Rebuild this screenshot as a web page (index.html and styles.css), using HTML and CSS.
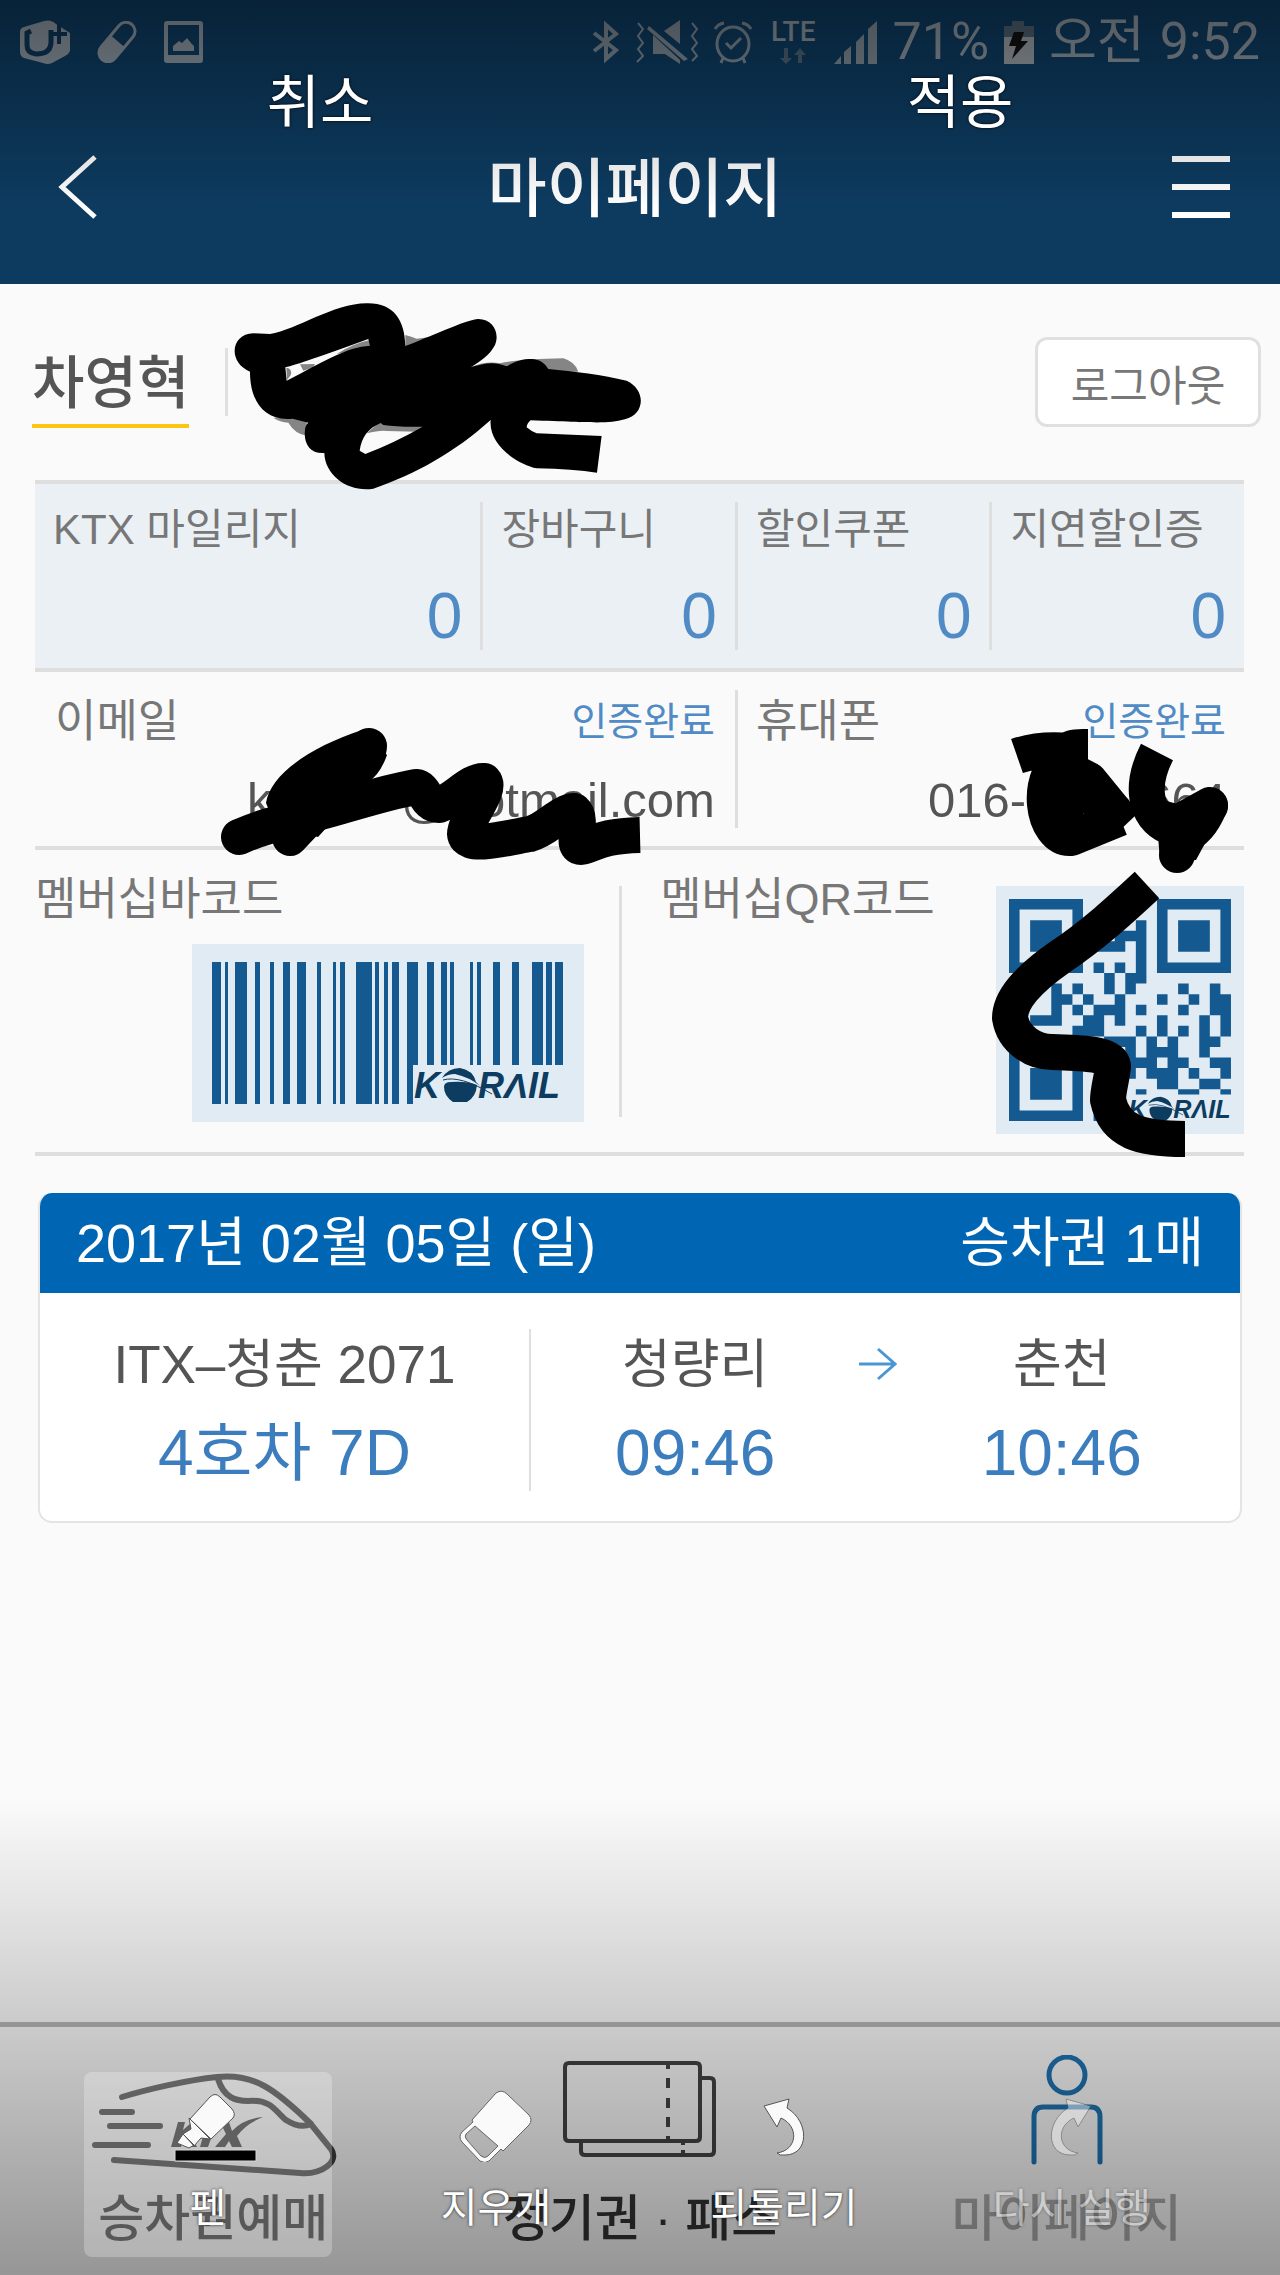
FILE: index.html
```html
<!DOCTYPE html>
<html lang="ko">
<head>
    <meta charset="UTF-8">
    <meta name="viewport" content="width=device-width, initial-scale=1.0">
    <title>마이페이지</title>
    <link rel="stylesheet" href="styles.css">
</head>
<body>

    <!-- Header -->
    <header class="header">
        <div class="status-bar">
            <div class="status-left">
                <svg width="50" height="44" viewBox="0 0 50 44">
                    <path fill="#8a959f" d="M4 7 24 1Q31 -1 36 4L50 13V31Q49 34 45 36L32 43Q28 45 23 43L4 38Q0 36 0 32V12Q0 8 4 7Z"/>
                    <path fill="none" stroke="#0d3657" stroke-width="5" d="M11 11 7 13V25Q7 33 16 34Q31 34 31 22V10"/>
                    <path fill="none" stroke="#0d3657" stroke-width="4" d="M39 2V24M33 14H47"/>
                </svg>
                <svg width="42" height="42" viewBox="0 0 42 42">
                    <g transform="rotate(40 21 21)">
                        <rect x="12" y="-2" width="18" height="46" rx="9" fill="none" stroke="#8a959f" stroke-width="3"/>
                        <path fill="#8a959f" d="M11 20H31V35A10 10 0 0 1 11 35Z"/>
                    </g>
                </svg>
                <svg width="39" height="42" viewBox="0 0 39 42">
                    <path fill="#8a959f" fill-rule="evenodd" d="M3 0H36Q39 0 39 3V39Q39 42 36 42H3Q0 42 0 39V3Q0 0 3 0ZM4 4V34H35V4ZM9 30V25L15 20L18 22L23 17L27 22L30 25V30Z"/>
                </svg>
            </div>
            <div class="status-right">
                <svg width="28" height="42" viewBox="0 0 28 42">
                    <path fill="none" stroke="#7c8993" stroke-width="4" d="M2 12 24 29 14 38V4L24 13 2 30"/>
                </svg>
                <svg width="64" height="44" viewBox="0 0 64 44">
                    <path fill="#7c8993" d="M29 11 45 0V24ZM18 15 45 40V44L30 34H18ZM14 6 53 39 49 41 12 9Z"/>
                    <path fill="none" stroke="#7c8993" stroke-width="2" d="M3 3 8 9 3 16 8 23 3 29 8 36 2 42M57 3 62 9 57 16 62 23 57 29 62 36 57 41"/>
                </svg>
                <svg width="38" height="43" viewBox="0 0 38 43">
                    <g fill="none" stroke="#7c8993" stroke-width="3">
                        <ellipse cx="19" cy="23" rx="16" ry="17"/>
                        <path d="M1 8Q4 3 10 2M37 8Q34 3 28 2M12 22 17 27 27 17M9 37 7 42M29 37 31 42"/>
                    </g>
                </svg>
                <div class="network">
                    <span>LTE</span>
                    <svg width="26" height="16" viewBox="0 0 26 16">
                        <path fill="#4a6071" d="M4 0H8V10H12L6 16 0 10H4ZM18 15H22V7H26L20 0 14 7H18Z"/>
                    </svg>
                </div>
                <svg width="43" height="43" viewBox="0 0 43 43">
                    <path fill="#7c8993" d="M0 43 7 35V43ZM10 31 17 25V43H10ZM22 21 30 13V43H22ZM34 8 43 0V43H34Z"/>
                </svg>
                <span class="status-text battery-level">71%</span>
                <svg width="30" height="43" viewBox="0 0 30 43">
                    <path fill="#4a5f6f" d="M8 0H20V5H30V17H0V5H8Z"/>
                    <path fill="#969da4" d="M0 16H30V43H0Z"/>
                    <path fill="#111" d="M10 11H20L17 20H24L8 38 12 25H5Z"/>
                </svg>
                <span class="status-text">오전</span>
                <span class="status-text">9:52</span>
            </div>
        </div>
        <div class="title-bar">
            <button class="icon-button" type="button" aria-label="뒤로">
                <svg width="40" height="64" viewBox="0 0 40 64">
                    <path fill="none" stroke="#fff" stroke-width="5" d="M37 2 4 32 37 62"/>
                </svg>
            </button>
            <h1>마이페이지</h1>
            <button class="icon-button" type="button" aria-label="메뉴">
                <svg width="58" height="64" viewBox="0 0 58 64">
                    <path stroke="#fff" stroke-width="6" d="M0 4H58M0 32H58M0 60H58"/>
                </svg>
            </button>
        </div>
    </header>

    <!-- My page -->
    <main>
        <div class="profile">
            <h2>차영혁</h2>
            <span class="profile-line"></span>
            <button class="logout" type="button">로그아웃</button>
        </div>

        <dl class="stats">
            <div class="cell"><dt>KTX 마일리지</dt><dd>0</dd></div>
            <div class="cell"><dt>장바구니</dt><dd>0</dd></div>
            <div class="cell"><dt>할인쿠폰</dt><dd>0</dd></div>
            <div class="cell"><dt>지연할인증</dt><dd>0</dd></div>
        </dl>

        <div class="contact">
            <div class="contact-cell">
                <div class="contact-top"><span class="label">이메일</span><span class="verified">인증완료</span></div>
                <div class="contact-value email"><span>k</span><span>@hotmail.com</span></div>
            </div>
            <div class="contact-cell">
                <div class="contact-top"><span class="label">휴대폰</span><span class="verified">인증완료</span></div>
                <div class="contact-value phone"><span>016-</span><span>664</span></div>
            </div>
        </div>

        <div class="membership">
            <div class="barcode-cell">
                <span class="label">멤버십바코드</span>
                <svg class="barcode" viewBox="0 0 392 178" role="img" aria-label="KORAIL 바코드">
                    <path fill="#145a90" d="M20 18h9v142h-9zM33 18h3v142h-3zM43 18h12v142h-12zM63 18h5v142h-5zM78 18h4v142h-4zM91 18h7v142h-7zM105 18h9v142h-9zM125 18h4v142h-4zM141 18h3v142h-3zM148 18h5v142h-5zM164 18h16v142h-16zM183 18h4v142h-4zM192 18h4v142h-4zM200 18h7v142h-7zM215 18h11v103h-5v39h-6zM235 18h7v103h-7zM249 18h6v103h-6zM258 18h4v103h-4zM278 18h3v103h-3zM285 18h4v103h-4zM301 18h7v103h-7zM320 18h7v103h-7zM340 18h11v103h-11zM354 18h6v103h-6zM363 18h8v103h-8z"/>
                    <g id="korail" fill="#0d3c61">
                        <text class="korail-text" x="222" y="154">K</text>
                        <text class="korail-text" x="286" y="154">RΛIL</text>
                        <path d="M252 143Q252 138 259 138Q275 137 285 141Q284 153 275 158H261Q252 152 252 143ZM250 134Q256 124 268 124Q281 126 284 138L288 142Q277 133 263 130Q256 130 250 134Z"/>
                        <path fill="none" stroke="#0d3c61" stroke-width="1" d="M251 136Q268 131 300 150"/>
                    </g>
                </svg>
            </div>
            <div class="qr-cell">
                <span class="label">멤버십QR코드</span>
                <svg class="qr" viewBox="0 0 248 248" role="img" aria-label="KORAIL QR코드">
                    <!-- one unit per module -->
                    <g transform="translate(13 13) scale(10.57)" fill="none" stroke="#145a90">
                        <path d="M.5 .5h6v6h-6zM14.5 .5h6v6h-6zM.5 14.5h6v6h-6z"/>
                        <path stroke-width="3" d="M2 3.5h3M16 3.5h3M2 17.5h3"/>
                        <path d="M12 2.5h1M10 3.5h3M8 4.5h3m1 0h1M12 5.5h1M8 6.5h1m1 0h1m1 0h1M9 7.5h1m1 0h2M4 8.5h1m1 0h1m2 0h1m1 0h1m4 0h1m2 0h1M4 9.5h2m1 0h1m2 0h1m3 0h1m2 0h1m1 0h2M4 10.5h1m1 0h1m1 0h3m1 0h1m3 0h1m2 0h2M2 11.5h3m2 0h2m1 0h1m3 0h1m3 0h1m1 0h1M6 12.5h3m3 0h1m1 0h1m1 0h1m1 0h1m1 0h1M9 13.5h3m1 0h1m1 0h1m2 0h2M11 14.5h1m1 0h3m2 0h1M11 15.5h3m1 0h2m2 0h2M11 16.5h1m1 0h3m1 0h1m2 0h1M14 17.5h2m2 0h2M8 20.5h1"/>
                        <path stroke-width=".5" d="M12 18.25h1m3 0h2m2 0h1"/>
                    </g>
                    <use href="#korail" transform="translate(-23 124) scale(.7)"/>
                </svg>
            </div>
        </div>

        <section class="ticket">
            <div class="ticket-head">
                <span>2017년 02월 05일 (일)</span>
                <span>승차권 1매</span>
            </div>
            <div class="ticket-body">
                <div class="train">
                    <p>ITX–청춘 2071</p>
                    <p class="blue">4호차 7D</p>
                </div>
                <div class="journey">
                    <div><p>청량리</p><p class="blue">09:46</p></div>
                    <svg width="38" height="34" viewBox="0 0 38 34">
                        <path fill="none" stroke="#4c97d3" stroke-width="3" d="M0 17H36M19 2 36 17 19 32"/>
                    </svg>
                    <div><p>춘천</p><p class="blue">10:46</p></div>
                </div>
            </div>
        </section>
    </main>

    <nav class="bottom-nav">
        <a href="#booking">
            <svg width="250" height="136" viewBox="0 0 250 136">
                <g fill="none" stroke="#3c3c3c" stroke-width="6" stroke-linecap="round">
                    <path d="M34 42C60 34 100 25 129 22C165 18 187 34 222 68L243 94C252 107 233 120 212 118L26 105"/>
                    <path d="M130 24C136 43 148 46 160 46C185 44 188 58 198 65Q212 74 223 69M14 57H44M22 71H72M7 90H60"/>
                </g>
                <path fill="#3c3c3c" d="M90 67H97L95 75 104 67H112L101 78 109 92H101L95 83 93 92H83ZM116 73H130L129 78H125L120 92H112L116 78H114ZM132 67H141L144 76Q155 64 175 62Q158 69 149 81L154 92H144L141 86 137 92H127L138 79Z"/>
            </svg>
            <span>승차권예매</span>
        </a>
        <a href="#pass">
            <svg width="156" height="136" viewBox="0 0 156 136">
                <path fill="none" stroke="#444" stroke-width="4" d="M7 8H134Q138 8 138 12V82Q138 86 134 86H7Q3 86 3 82V12Q3 8 7 8ZM138 23H148Q152 23 152 27V96Q152 100 148 100H23Q19 100 19 96V86M106 9V14M106 23V33M106 43V53M106 62V72M106 81V86M121 87V90M121 95V100"/>
            </svg>
            <span>정기권 · 패스</span>
        </a>
        <a class="current" href="#mypage">
            <svg width="74" height="136" viewBox="0 0 74 136">
                <g fill="none" stroke="#1f74b3" stroke-width="5">
                    <ellipse cx="37" cy="20" rx="18" ry="18"/>
                    <path stroke-linecap="round" d="M4 107V62Q4 52 13 52H61Q70 52 70 62V107"/>
                </g>
            </svg>
            <span>마이페이지</span>
        </a>
    </nav>

    <!-- Image editor layer -->
    <div class="shade shade-top"></div>
    <div class="shade shade-bottom"></div>

    <svg class="drawing" viewBox="0 0 1280 2275" aria-hidden="true">
        <g transform="translate(220 290) scale(.3333)">
            <path class="under" d="M350 192Q400 160 450 150V172ZM556 135Q575 140 590 146L630 141 556 172ZM753 231Q800 212 840 220Q900 207 1030 205Q1065 215 1075 245L753 250ZM160 383Q180 397 205 398Q225 432 260 437V380ZM440 430Q480 420 500 423L590 425 620 405 480 395ZM199 233Q218 236 212 256L201 270ZM240 223 285 222 280 232 250 242Z"/>
            <path class="blot" d="M100 130 150 132C230 120 340 40 440 40C520 38 555 90 556 168C620 145 740 88 775 87C820 87 840 130 825 165C810 195 780 215 753 231C790 222 820 212 860 229C890 212 905 207 935 207C960 208 975 220 985 237C1060 244 1150 255 1220 272C1280 300 1275 375 1215 388C1160 402 1130 398 932 391Q921 400 920 412Q935 425 950 430L1145 438 1131 548Q1060 537 950 535C900 525 805 470 812 390C700 490 590 550 460 596C390 608 315 560 313 489C270 492 250 460 255 420Q256 405 265 398L218 386C130 395 90 330 90 245C20 215 35 130 100 130ZM196 232Q240 222 445 147L450 167C380 172 330 205 200 272ZM482 399 490 405Q540 412 608 410Q520 460 436 492L419 482C425 440 445 415 482 399Z"/>
        </g>
        <g class="pen">
            <path class="round" d="M239 837Q266 825 285 823L369 746Q369 760 340 785L290 838"/>
            <path class="blot" d="M266 803C270 775 310 747 362 730L387 755Q380 775 367 783L318 837 275 825Z"/>
            <path d="M285 820C325 814 370 795 416 787C426 788 425 805 439 805C455 800 470 780 484 781C492 790 465 820 465 834C466 850 515 836 530 834C546 830 560 812 574 811C584 820 570 847 581 847C595 844 600 836 640 835"/>
            <path d="M1017 756Q1040 748 1070 751C1030 775 1043 840 1071 838L1120 818M1120 818 1089 780 1060 765"/>
            <path class="blot" d="M1034 768 1059 736Q1064 728 1088 729V763L1106 785 1128 799 1136 815 1118 832 1087 819 1084 813 1077 819Q1050 830 1034 768Z"/>
            <circle cx="1089" cy="781" r="18"/>
            <path d="M1157 752C1140 785 1144 816 1170 827L1210 805Q1200 830 1185 835L1178 854"/>
            <path class="blot" d="M1150 800 1165 800Q1175 805 1188 804L1197 792 1226 813 1209 836 1196 860H1160L1158 836Z"/>
            <circle cx="1210" cy="806" r="18"/>
            <circle cx="1177" cy="855" r="18"/>
            <path d="M1147 885C1120 910 1093 935 1060 957C1027 980 1010 1000 1010 1018C1014 1041 1035 1052 1052 1052C1080 1053 1111 1053 1113 1066C1112 1078 1108 1090 1108 1100C1115 1132 1140 1139 1185 1139"/>
        </g>
    </svg>

    <div class="editor-actions">
        <button type="button">취소</button>
        <button type="button">적용</button>
    </div>

    <div class="tools">
        <button class="tool active" type="button">
            <svg width="98" height="76" viewBox="-15 0 98 76">
                <g fill="#fafafa" stroke="#555" stroke-width="1">
                    <path d="M16 33 36 11Q41 6 46 11L58 23Q62 28 59 32L37 53Z"/>
                    <path d="M15 32 36 53 27 52 20 60 9 48 17 43ZM9 48 20 59 15 62 3 57Z"/>
                </g>
                <path stroke="#d8d8d8" stroke-width="1" d="M1 64H82V75H1Z"/>
            </svg>
            <span>펜</span>
        </button>
        <button class="tool" type="button">
            <svg width="84" height="76" viewBox="0 0 84 76">
                <path fill="#fafafa" stroke="#666" stroke-width="1" fill-rule="evenodd" d="M42 7Q48 3 53 8L75 29Q79 34 75 39L49 65 47 63 35 75Q31 78 26 75L8 56Q4 51 8 46L19 36 18 34ZM21 40 12 48Q10 51 13 54L27 70Q31 73 34 70L44 60Z"/>
            </svg>
            <span>지우개</span>
        </button>
        <button class="tool" type="button">
            <svg width="84" height="76" viewBox="0 0 84 76">
                <path fill="#fafafa" stroke="#555" stroke-width="1" d="M22 20 47 13 45 22C68 36 67 69 43 69Q38 70 35 67C56 64 57 40 39 32L35 41Z"/>
            </svg>
            <span>되돌리기</span>
        </button>
        <button class="tool" type="button" disabled>
            <svg width="84" height="76" viewBox="-6 0 84 76">
                <path fill="#fafafa" stroke="#555" stroke-width="1" d="M55 20 30 13 32 22C9 36 10 69 34 69Q39 70 42 67C21 64 20 40 38 32L42 41Z"/>
            </svg>
            <span>다시 실행</span>
        </button>
    </div>

</body>
</html>
```
FILE: styles.css
```css
* {
    box-sizing: border-box;
}

body {
    margin: 0;
    min-height: 100vh;
    position: relative;
    display: flex;
    flex-direction: column;
    background-color: #fafafa;
    color: #555;
    font-family: "Liberation Sans", "Noto Sans CJK KR", sans-serif;
}

h1, h2, p, dl, dd {
    margin: 0;
}

button {
    padding: 0;
    border: none;
    background: none;
    color: inherit;
    font-family: inherit;
}

svg {
    display: block;
    flex-shrink: 0;
}

/* Header */
.header {
    background-color: #0d3b60;
    color: #fff;
}

.status-bar {
    height: 90px;
    padding: 0 20px 6px;
    display: flex;
    justify-content: space-between;
    align-items: center;
}

.status-left {
    display: flex;
    align-items: center;
    gap: 26px;
}

.status-right {
    display: flex;
    align-items: center;
    gap: 15px;
    color: #8a959f;
}

.network {
    display: flex;
    flex-direction: column;
    align-items: center;
    gap: 4px;
    margin: 0 4px;
    font: 500 28px/24px Roboto, sans-serif;
}

.status-text {
    font: 52px/60px Roboto, "Noto Sans CJK KR", sans-serif;
}

.title-bar {
    height: 194px;
    padding: 0 50px 0 58px;
    display: flex;
    justify-content: space-between;
    align-items: center;
}

.title-bar h1 {
    padding-top: 4px;
    font-size: 64px;
    line-height: 80px;
    font-weight: 500;
}

/* Profile */
.profile {
    height: 196px;
    padding: 0 19px 0 32px;
    display: flex;
    align-items: center;
}

.profile h2 {
    padding-top: 6px;
    border-bottom: 4px solid #fcc512;
    font-size: 57px;
    line-height: 82px;
    font-weight: 500;
}

.profile-line {
    width: 3px;
    height: 68px;
    margin-left: 36px;
    background-color: #e0e0e0;
}

.logout {
    width: 226px;
    height: 90px;
    margin-left: auto;
    border: 3px solid #e0e0e0;
    border-radius: 12px;
    background-color: #fff;
    color: #777;
    font-size: 42px;
}

/* Mileage and coupons */
.stats {
    margin: 0 36px 0 35px;
    padding: 18px 0;
    display: grid;
    grid-template-columns: 7fr 4fr 4fr 4fr;
    border-top: 4px solid #dedede;
    border-bottom: 4px solid #dedede;
    background-color: #ebf0f5;
}

.cell {
    height: 148px;
    padding: 0 18px;
}

.cell + .cell {
    border-left: 3px solid #dedede;
}

.cell dt {
    color: #777;
    font-size: 42px;
    line-height: 56px;
}

.cell dd {
    margin-top: 18px;
    color: #508bc5;
    font-size: 64px;
    line-height: 80px;
    text-align: right;
}

/* E-mail and phone */
.contact {
    margin: 0 36px 0 35px;
    padding: 18px 0;
    display: grid;
    grid-template-columns: 11fr 8fr;
    border-bottom: 4px solid #dedede;
}

.contact-cell {
    height: 138px;
    padding: 0 20px;
}

.contact-cell + .contact-cell {
    padding: 0 18px;
    border-left: 3px solid #dedede;
}

.contact-top {
    display: flex;
    justify-content: space-between;
    align-items: center;
}

.label {
    color: #777;
    font-size: 45px;
    line-height: 60px;
}

.verified {
    color: #508bc5;
    font-size: 39px;
    line-height: 64px;
}

.contact-value {
    margin-top: 16px;
    display: flex;
    justify-content: space-between;
    font-size: 49px;
    line-height: 60px;
}

.email {
    padding-left: 192px;
}

.phone {
    padding-left: 172px;
}

/* Membership codes */
.membership {
    margin: 0 36px 0 35px;
    padding: 36px 0 18px;
    display: grid;
    grid-template-columns: 17fr 18fr;
    align-items: start;
    border-bottom: 4px solid #dedede;
}

.membership .label {
    line-height: 28px;
}

.barcode-cell {
    height: 231px;
    padding-right: 35px;
    display: flex;
    flex-direction: column;
    gap: 30px;
    border-right: 3px solid #dedede;
}

.barcode {
    width: 392px;
    height: 178px;
    align-self: flex-end;
    background-color: #e1ebf4;
}

.korail-text {
    font: italic bold 36px "Liberation Sans", sans-serif;
}

.qr-cell {
    padding-left: 38px;
    display: flex;
    justify-content: space-between;
}

.qr {
    width: 248px;
    height: 248px;
    background-color: #e1ebf4;
}

/* Ticket */
.ticket {
    margin: 37px 38px 0;
    overflow: hidden;
    border: 2px solid #e4e4e4;
    border-top: none;
    border-radius: 14px;
    background-color: #fff;
}

.ticket-head {
    padding: 14px 36px;
    display: flex;
    justify-content: space-between;
    background-color: #0066b3;
    color: #fff;
    font-size: 54px;
    line-height: 72px;
}

.ticket-body {
    padding: 36px 0 30px;
    display: grid;
    grid-template-columns: 9fr 13fr;
    text-align: center;
}

.ticket-body p {
    font-size: 53px;
    line-height: 72px;
}

.ticket-body .blue {
    margin-top: 14px;
    color: #3b7dbd;
    font-size: 64px;
    line-height: 76px;
}

.train {
    border-right: 2px solid #dedede;
}

.journey {
    padding-right: 14px;
    display: grid;
    grid-template-columns: 1fr auto 1fr;
}

.journey svg {
    margin-top: 18px;
}

/* Bottom navigation */
.bottom-nav {
    height: 253px;
    margin-top: auto;
    padding-top: 28px;
    display: grid;
    grid-template-columns: repeat(3, 1fr);
    border-top: 5px solid #b8b8b8;
}

.bottom-nav a {
    display: flex;
    flex-direction: column;
    align-items: center;
    color: #333;
    font-size: 50px;
    line-height: 56px;
    font-weight: 500;
    text-decoration: none;
}

.bottom-nav .current {
    color: #aaa;
}

/* Image editor */
.shade {
    position: absolute;
    left: 0;
    right: 0;
}

.shade-top {
    top: 0;
    height: 210px;
    background: linear-gradient(rgba(0, 0, 0, 0.42), rgba(0, 0, 0, 0));
}

.shade-bottom {
    bottom: 0;
    height: 475px;
    background: linear-gradient(rgba(0, 0, 0, 0), rgba(0, 0, 0, 0.4));
}

.drawing {
    position: absolute;
    top: 0;
    left: 0;
    width: 100%;
    pointer-events: none;
}

.pen path {
    fill: none;
    stroke: #000;
    stroke-width: 36px;
    stroke-linejoin: round;
}

.pen .round {
    stroke-linecap: round;
}

.drawing .blot {
    fill: #000;
    fill-rule: evenodd;
    stroke: none;
}

.under {
    fill: #858585;
}

.editor-actions {
    position: absolute;
    top: 63px;
    left: 0;
    right: 0;
    display: grid;
    grid-template-columns: 1fr 1fr;
}

.editor-actions button {
    color: #fff;
    font-size: 58px;
    line-height: 80px;
    text-shadow: 0 0 3px #000;
}

.tools {
    position: absolute;
    bottom: 18px;
    left: 0;
    right: 0;
    padding: 0 5%;
    display: grid;
    grid-template-columns: repeat(4, 1fr);
}

.tool {
    height: 185px;
    margin: 0 20px;
    padding-top: 14px;
    display: flex;
    flex-direction: column;
    align-items: center;
    gap: 18px;
    border-radius: 8px;
    color: #fff;
    font-size: 40px;
    line-height: 56px;
    text-shadow: 0 0 3px #222;
}

.tool.active {
    background-color: rgba(255, 255, 255, 0.25);
}

.tool:disabled {
    opacity: 0.45;
}
```
